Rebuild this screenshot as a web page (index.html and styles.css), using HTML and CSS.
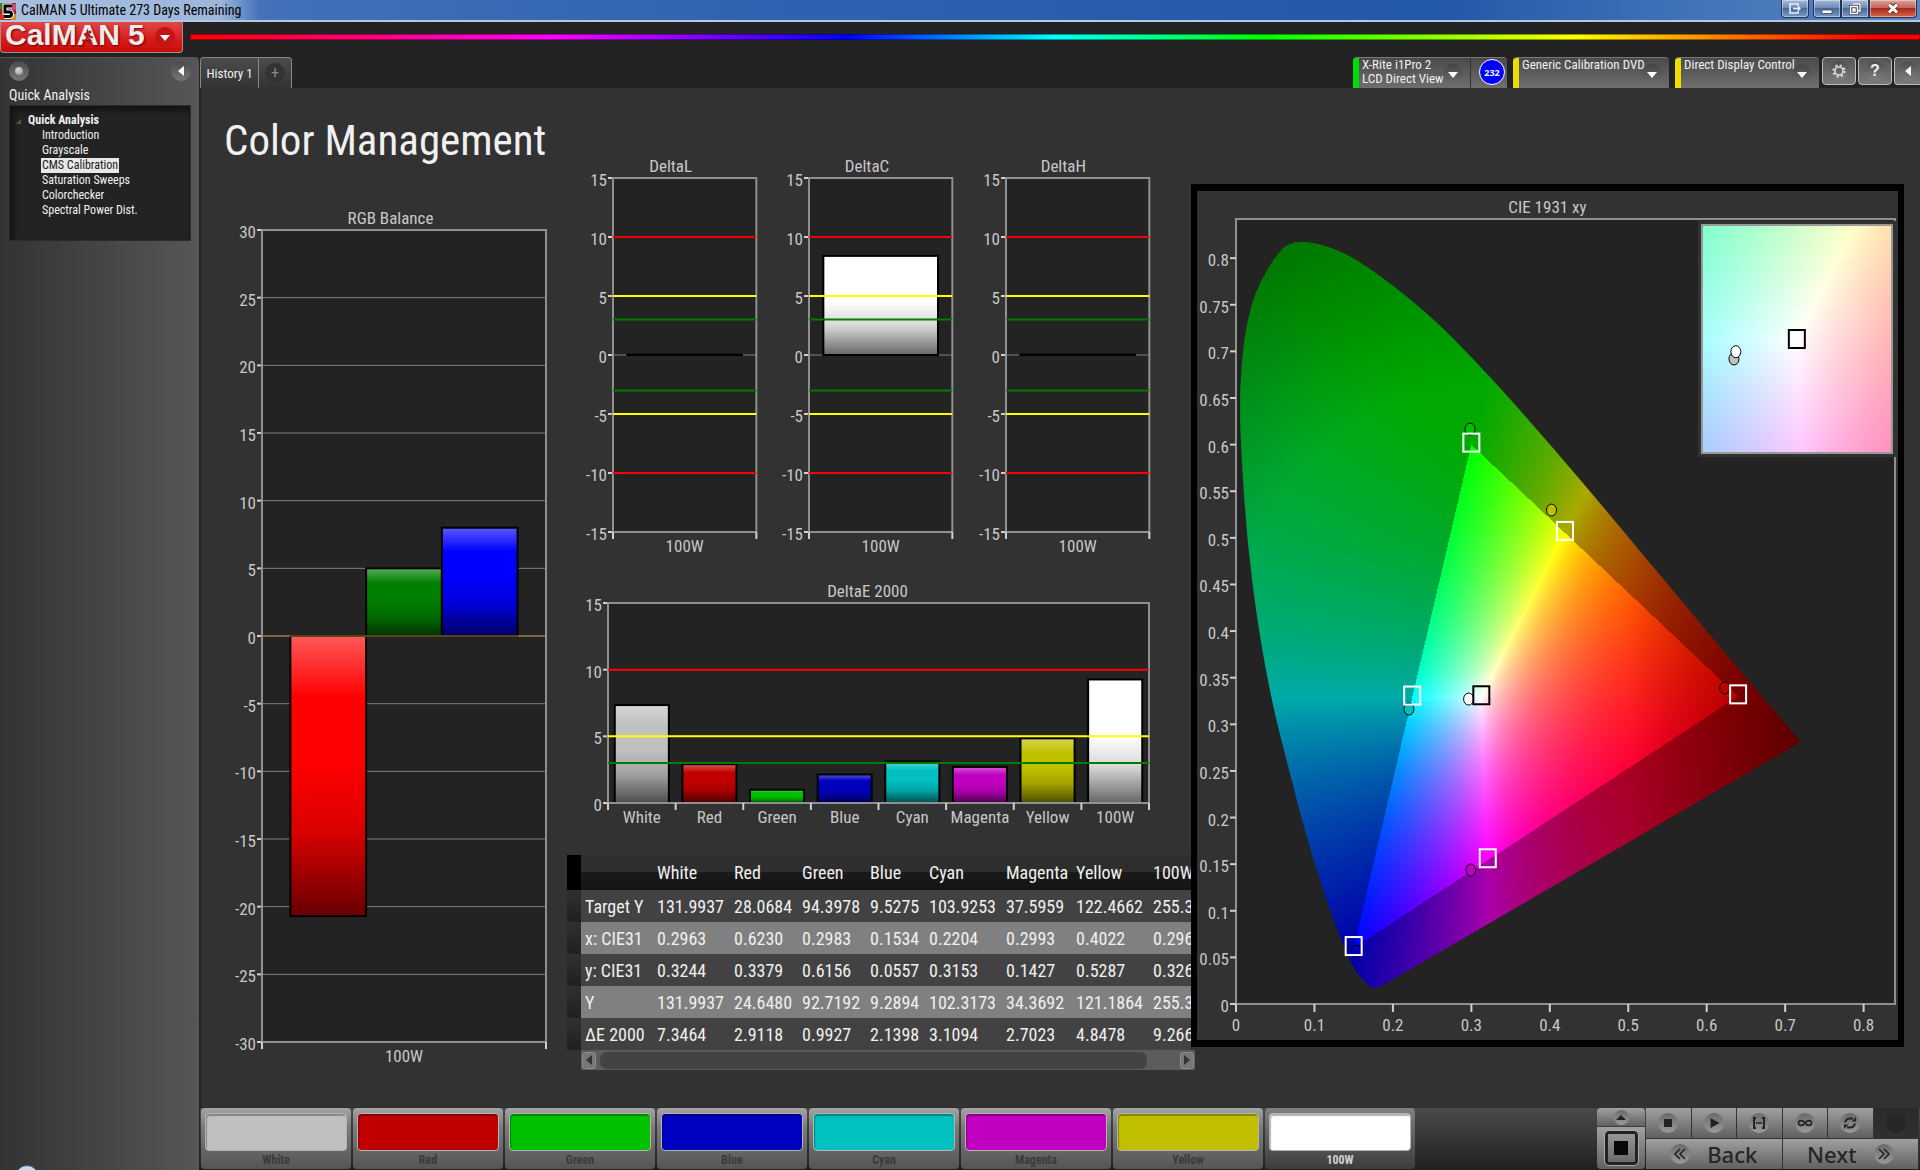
FILE: index.html
```html
<!DOCTYPE html>
<html lang="en">
  <head>
    <meta charset="UTF-8" />
    <meta name="viewport" content="width=device-width, initial-scale=1.0" />
    <title>CalMAN 5 Ultimate 273 Days Remaining</title>
    <link rel="stylesheet" href="styles.css">
  </head>
  <body>
    <header class="titlebar">
      <svg class="app-icon" viewBox="0 0 16 17">
        <rect width="16" height="17" fill="#9c2a22" />
        <rect x="0" y="0" width="5" height="6" fill="#3f7d2a" />
        <rect x="11" y="1" width="5" height="6" fill="#c64a8c" />
        <rect x="11" y="11" width="5" height="6" fill="#d98a1c" />
        <rect x="0" y="11" width="4" height="6" fill="#d8302a" />
        <path d="M12 3H5v6h4.500q2 0 2 2.300t-2.500 2.300H4" fill="none" stroke="#fff" stroke-width="5" />
        <path d="M12 3H5v6h4.500q2 0 2 2.300t-2.500 2.300H4" fill="none" stroke="#000" stroke-width="3" />
      </svg>
      <span class="window-title">CalMAN 5 Ultimate 273 Days Remaining</span>
      <div class="window-buttons">
        <button class="win-btn detach" aria-label="Detach">
          <svg width="12" height="11" viewBox="0 0 12 11"><path d="M9 3V1H1v9h8V8M4 5.500h7M9 3.500l2 2-2 2" fill="none" stroke="#eef" stroke-width="1.500" /></svg>
        </button>
        <div class="win-group">
          <button class="win-btn" aria-label="Minimize">
            <svg width="12" height="11" viewBox="0 0 12 11"><rect x="1" y="7" width="10" height="3.500" fill="#fff" stroke="#445" stroke-width=".8" /></svg>
          </button>
          <button class="win-btn" aria-label="Restore">
            <svg width="12" height="12" viewBox="0 0 12 12"><path d="M4 1h7v7H9M1.500 3.500h7v7h-7zM4 6h2v2H4z" fill="none" stroke="#445" stroke-width="3" /><path d="M4 1h7v7H9M1.500 3.500h7v7h-7zM4 6h2v2H4z" fill="none" stroke="#fff" stroke-width="1.400" /></svg>
          </button>
          <button class="win-btn close" aria-label="Close">
            <svg width="12" height="11" viewBox="0 0 12 11"><path d="M2 1l8 9M10 1L2 10" stroke="#544" stroke-width="4.500" /><path d="M2 1.500l8 8M10 1.500l-8 8" stroke="#fff" stroke-width="2.800" /></svg>
          </button>
        </div>
      </div>
    </header>

    <div class="brand-row">
      <button class="brand">
        <span class="brand-name">CalM<span class="brand-a">A<svg class="runner" viewBox="0 0 14 14"><circle cx="9" cy="2" r="1.600" /><path d="M3 4.500l3-1 2 1.500 1 2 3 .5M8 4.500L6 8l3 2-1 3.500M6 8l-1.500 2.500H1" /></svg></span>N</span>
        <span class="brand-five">5</span>
        <span class="brand-arrow"></span>
      </button>
      <div class="rainbow"></div>
    </div>

    <div class="shell">
      <aside class="sidebar">
        <div class="sidebar-top">
          <button class="round" aria-label="Record"><span class="dot"></span></button>
          <button class="round" aria-label="Collapse"><span class="arrow-left"></span></button>
        </div>
        <h2>Quick Analysis</h2>
        <nav class="tree">
          <p class="tree-root">Quick Analysis</p>
          <a href="#">Introduction</a>
          <a href="#">Grayscale</a>
          <a href="#" class="selected">CMS Calibration</a>
          <a href="#">Saturation Sweeps</a>
          <a href="#">Colorchecker</a>
          <a href="#">Spectral Power Dist.</a>
        </nav>
        <div class="orb-strip"><span class="orb"></span></div>
      </aside>

      <div class="page">
        <div class="toolbar">
          <div class="tabs">
            <button class="tab">History 1</button>
            <button class="tab tab-add" aria-label="Add history"><span>+</span></button>
          </div>
          <div class="devices">
            <div class="device meter">
              <button class="device-menu green">
                <span>X-Rite i1Pro 2<br>LCD Direct View</span>
                <i class="drop"></i>
              </button>
              <button class="count">232</button>
            </div>
            <div class="device source">
              <button class="device-menu yellow"><span>Generic Calibration DVD</span><i class="drop"></i></button>
            </div>
            <div class="device display">
              <button class="device-menu yellow"><span>Direct Display Control</span><i class="drop"></i></button>
            </div>
            <button class="tool" aria-label="Settings">
              <span class="tool-disc"><svg width="14" height="14" viewBox="0 0 14 14"><circle cx="7" cy="7" r="4" fill="none" stroke="#ddd" stroke-width="1.600" /><circle cx="7" cy="7" r="5.700" fill="none" stroke="#ddd" stroke-width="1.800" stroke-dasharray="2.240 2.240" /></svg></span>
            </button>
            <button class="tool" aria-label="Help"><span class="tool-disc help">?</span></button>
            <button class="tool last" aria-label="Collapse panel"><span class="tool-disc"><span class="arrow-left"></span></span></button>
          </div>
        </div>

        <main class="workspace">
          <section class="col-left">
            <h1>Color Management</h1>
            <figure class="chart rgb">
              <figcaption>RGB Balance</figcaption>
              <div class="plot"><svg id="rgbBalance"></svg></div>
            </figure>
          </section>

          <section class="col-mid">
            <div class="deltas">
              <figure class="chart">
                <figcaption>DeltaL</figcaption>
                <div class="plot"><svg id="deltaL"></svg></div>
              </figure>
              <figure class="chart">
                <figcaption>DeltaC</figcaption>
                <div class="plot"><svg id="deltaC"></svg></div>
              </figure>
              <figure class="chart">
                <figcaption>DeltaH</figcaption>
                <div class="plot"><svg id="deltaH"></svg></div>
              </figure>
            </div>
            <figure class="chart delta-e">
              <figcaption>DeltaE 2000</figcaption>
              <div class="plot"><svg id="deltaE"></svg></div>
            </figure>
            <div class="grid-box">
              <div class="grid-clip">
                <table class="readings">
                  <colgroup>
                    <col class="w-sel" /><col class="w-label" /><col class="w-wide" /><col class="w-mid" /><col class="w-mid" />
                    <col class="w-small" /><col class="w-wide" /><col class="w-mag" /><col class="w-wide" /><col class="w-wide" />
                  </colgroup>
                  <thead>
                    <tr><th></th><th></th><th>White</th><th>Red</th><th>Green</th><th>Blue</th><th>Cyan</th><th>Magenta</th><th>Yellow</th><th>100W</th></tr>
                  </thead>
                  <tbody>
                    <tr><td></td><th>Target Y</th><td>131.9937</td><td>28.0684</td><td>94.3978</td><td>9.5275</td><td>103.9253</td><td>37.5959</td><td>122.4662</td><td>255.3</td></tr>
                    <tr><td></td><th>x: CIE31</th><td>0.2963</td><td>0.6230</td><td>0.2983</td><td>0.1534</td><td>0.2204</td><td>0.2993</td><td>0.4022</td><td>0.296</td></tr>
                    <tr><td></td><th>y: CIE31</th><td>0.3244</td><td>0.3379</td><td>0.6156</td><td>0.0557</td><td>0.3153</td><td>0.1427</td><td>0.5287</td><td>0.326</td></tr>
                    <tr><td></td><th>Y</th><td>131.9937</td><td>24.6480</td><td>92.7192</td><td>9.2894</td><td>102.3173</td><td>34.3692</td><td>121.1864</td><td>255.3</td></tr>
                    <tr><td></td><th>ΔE 2000</th><td>7.3464</td><td>2.9118</td><td>0.9927</td><td>2.1398</td><td>3.1094</td><td>2.7023</td><td>4.8478</td><td>9.266</td></tr>
                  </tbody>
                </table>
              </div>
              <div class="hscroll">
                <button aria-label="Scroll left"><span class="arrow-left dark"></span></button>
                <div class="track"><div class="thumb"></div></div>
                <button aria-label="Scroll right"><span class="arrow-right dark"></span></button>
              </div>
            </div>
          </section>

          <section class="col-right">
            <figure class="chart cie">
              <figcaption>CIE 1931 xy</figcaption>
              <div class="plot">
                <canvas id="gamut"></canvas>
                <svg id="ciePoints"></svg>
                <div class="inset">
                  <div class="inset-view">
                    <canvas id="gamutZoom"></canvas>
                    <svg id="zoomPoints"></svg>
                  </div>
                </div>
              </div>
            </figure>
          </section>
        </main>

        <footer class="bottombar">
          <div class="patches">
            <button class="patch"><span class="swatch white"></span>White</button>
            <button class="patch"><span class="swatch red"></span>Red</button>
            <button class="patch"><span class="swatch lime"></span>Green</button>
            <button class="patch"><span class="swatch blue"></span>Blue</button>
            <button class="patch"><span class="swatch cyan"></span>Cyan</button>
            <button class="patch"><span class="swatch magenta"></span>Magenta</button>
            <button class="patch"><span class="swatch olive"></span>Yellow</button>
            <button class="patch active"><span class="swatch full"></span>100W</button>
          </div>
          <div class="transport">
            <div class="stack">
              <button class="key up" aria-label="Expand"><span class="disc small"><span class="arrow-up"></span></span></button>
              <button class="key read" aria-label="Stop reading"><span class="read-frame"><span class="read-square"></span></span></button>
            </div>
            <div class="keys">
              <button class="key" aria-label="Stop"><span class="disc"><svg viewBox="0 0 20 20"><rect x="6" y="6" width="8" height="8" fill="#222" /></svg></span></button>
              <button class="key" aria-label="Play"><span class="disc"><svg viewBox="0 0 20 20"><path d="M6.500 5l9 5-9 5z" fill="#222" /></svg></span></button>
              <button class="key" aria-label="Read series"><span class="disc"><svg viewBox="0 0 20 20"><path d="M7 5H5v10h2M13 5h2v10h-2" fill="none" stroke="#222" stroke-width="2" /><path d="M7 10h6" stroke="#222" stroke-width="2" stroke-dasharray="1.500 .7" /></svg></span></button>
              <button class="key" aria-label="Continuous"><span class="disc"><svg viewBox="0 0 20 20"><path d="M10 10C8 7 3.500 6.500 3.500 10S8 13 10 10s6.500-3.500 6.500 0S12 13 10 10z" fill="none" stroke="#222" stroke-width="1.700" /></svg></span></button>
              <button class="key" aria-label="Refresh"><span class="disc"><svg viewBox="0 0 20 20"><path d="M5 9.500Q6 5.500 10 5.500h3M15 10.500q-1 4-5 4H7" fill="none" stroke="#222" stroke-width="2" /><path d="M11.500 8.500h4.500V4zM8.500 11.500H4V16z" fill="#222" /></svg></span></button>
              <button class="key off" aria-label="Unavailable" disabled><span class="disc dim"></span></button>
              <button class="key wide"><span class="disc"><svg viewBox="0 0 20 20"><path d="M10 5l-5 5 5 5M15 5l-5 5 5 5" fill="none" stroke="#222" stroke-width="1.600" /></svg></span>Back</button>
              <button class="key wide next">Next<span class="disc"><svg viewBox="0 0 20 20"><path d="M5 5l5 5-5 5M10 5l5 5-5 5" fill="none" stroke="#222" stroke-width="1.600" /></svg></span></button>
            </div>
          </div>
        </footer>
      </div>
    </div>

    <script src="charts.js"></script>
  </body>
</html>
```
FILE: styles.css
```css
* {
  box-sizing: border-box;
}
body {
  font-family: "Roboto Condensed", Carlito, Lato, sans-serif;
  margin: 0;
  min-height: 100vh;
  display: flex;
  flex-direction: column;
  background-color: #232323;
  color: #f0f0f0;
  overflow: hidden;
}
button {
  font-family: inherit;
  color: inherit;
  padding: 0;
  border: none;
  background: none;
  cursor: pointer;
}
h1,
h2,
p,
figure {
  margin: 0;
}
svg,
canvas {
  display: block;
}

/* window frame */
.titlebar {
  display: flex;
  align-items: flex-start;
  height: 22px;
  background: linear-gradient(90deg, #a9bfdf 0, #9db6da 220px, #4471b8 260px, #2f62b0 40%, #2458a8 75%, #4273b8 88%, #5a84c2 100%);
  border-bottom: 2px solid #b4c8e4;
}
.app-icon {
  width: 16px;
  height: 17px;
  margin-top: 3px;
}
.window-title {
  margin-left: 5px;
  font-size: 14px;
  line-height: 21px;
  color: #000;
}
.window-buttons {
  display: flex;
  gap: 4px;
  margin-left: auto;
  margin-right: 3px;
}
.win-group {
  display: flex;
}
.win-btn {
  display: grid;
  place-items: center;
  width: 28px;
  height: 18px;
  border: 1px solid #24354f;
  border-top: none;
  background: linear-gradient(#a9bbd8, #6784b2 50%, #48699d 50%, #7d9ac6);
  box-shadow: inset 0 0 0 1px rgba(255, 255, 255, 0.4);
}
.win-btn.detach {
  border-radius: 0 0 4px 4px;
}
.win-group .win-btn:first-child {
  border-radius: 0 0 0 4px;
}
.win-btn.close {
  width: 48px;
  border-radius: 0 0 4px 0;
  background: linear-gradient(#dba296, #c3604f 50%, #a8291a 50%, #d3654c);
}

/* logo and rainbow line */
.brand-row {
  display: flex;
  height: 35px;
}
.brand {
  display: flex;
  align-items: center;
  width: 183px;
  height: 31px;
  padding-left: 4px;
  border: 1px solid #a09090;
  border-top: none;
  border-radius: 0 0 4px 4px;
  background: linear-gradient(#e04848, #d81a1a 60%, #c80c0c);
  font-family: "Liberation Sans", Arial, sans-serif;
  font-size: 30px;
  font-weight: bold;
  line-height: 28px;
  color: #ececec;
  text-shadow: 1px 1px 2px #600;
}
.brand-name,
.brand-five {
  margin-top: -4px;
}
.brand-a {
  position: relative;
}
.runner {
  position: absolute;
  left: 4px;
  top: 12px;
  width: 14px;
  height: 14px;
  fill: #b01818;
}
.runner path {
  fill: none;
  stroke: #b01818;
  stroke-width: 2;
}
.brand-five {
  margin-left: 8px;
}
.brand-arrow {
  position: relative;
  width: 20px;
  height: 20px;
  margin-left: 10px;
  border-radius: 50%;
  background: #c41414;
}
.brand-arrow::after,
.drop::after {
  content: "";
  position: absolute;
  left: 50%;
  top: 50%;
  margin: -2px 0 0 -5px;
  border: 5px solid transparent;
  border-top: 6px solid #fff;
  border-bottom: none;
}
.rainbow {
  flex: 1;
  height: 6px;
  margin: 12px 0 0 7px;
  border: 1px solid rgba(0, 0, 0, 0.4);
  background: linear-gradient(90deg, #f00, #f0f 21%, #00f 38%, #0ff 50%, #0f0 62%, #ff0 80%, #f00 97%);
}

.shell {
  flex: 1;
  display: flex;
  min-height: 0;
}

/* sidebar */
.sidebar {
  display: flex;
  flex-direction: column;
  flex: 0 0 200px;
  padding: 3px 8px 0 9px;
  border-right: 1px solid #222;
  border-top: 1px solid #555;
  border-radius: 0 5px 0 0;
  background: linear-gradient(90deg, #333, #565656);
}
.sidebar-top {
  display: flex;
  justify-content: space-between;
}
.round {
  display: grid;
  place-items: center;
  width: 20px;
  height: 20px;
  border-radius: 50%;
  background: linear-gradient(#4a4a4a, #777);
}
.dot {
  width: 8px;
  height: 8px;
  border-radius: 50%;
  background: radial-gradient(circle at 40% 35%, #ddd, #888);
}
.arrow-left,
.arrow-right {
  border: 5px solid transparent;
  border-left: none;
  border-right: 6px solid #fff;
}
.arrow-right {
  border-right: none;
  border-left: 6px solid #fff;
}
.arrow-left.dark {
  border-right-color: #333;
}
.arrow-right.dark {
  border-left-color: #333;
}
.sidebar h2 {
  margin-top: 5px;
  font-size: 14px;
  font-weight: normal;
  line-height: 19px;
}
.tree {
  display: flex;
  flex-direction: column;
  align-items: flex-start;
  height: 136px;
  padding: 7px 0 0 18px;
  border: 1px solid #2b2b2b;
  background: #232323;
  box-shadow: inset 3px 4px 6px #111;
  font-size: 12px;
}
.tree-root {
  position: relative;
  font-weight: bold;
  line-height: 15px;
}
.tree-root::before {
  content: "";
  position: absolute;
  left: -12px;
  top: 6px;
  border-left: 5px solid transparent;
  border-bottom: 5px solid #555;
}
.tree a {
  margin-left: 13px;
  padding: 0 1px;
  line-height: 15px;
  color: #f0f0f0;
  text-decoration: none;
}
.tree a.selected {
  background: #e8e8e8;
  color: #222;
}
.orb-strip {
  height: 5px;
  margin-top: auto;
  overflow: hidden;
}
.orb {
  display: block;
  width: 24px;
  height: 24px;
  margin-left: 6px;
  border: 1px solid #1a5f94;
  border-radius: 50%;
  background: #c8dbe8;
}

/* tabs and device menus */
.page {
  flex: 1;
  display: flex;
  flex-direction: column;
  min-width: 0;
}
.toolbar {
  display: flex;
  justify-content: space-between;
  height: 31px;
  overflow: hidden;
}
.tabs {
  display: flex;
}
.tab {
  width: 59px;
  height: 31px;
  border: 1px solid #888;
  border-bottom: none;
  border-radius: 4px 0 0 0;
  background: linear-gradient(#4c4c4c, #333);
  font-size: 13px;
}
.tab-add {
  display: grid;
  place-items: center;
  width: 33px;
  border-left: none;
  border-radius: 0 4px 0 0;
}
.tab-add span {
  width: 20px;
  height: 20px;
  border-radius: 50%;
  background: #333;
  color: #888;
  font-size: 16px;
  line-height: 19px;
}
.devices {
  display: flex;
}
.device {
  display: flex;
  margin-right: 6px;
  border-top: 1px solid #777;
  border-radius: 4px 4px 0 0;
  background: linear-gradient(#4a4a4a, #6e6e6e);
  overflow: hidden;
}
.meter {
  width: 154px;
}
.source {
  width: 156px;
}
.display {
  width: 144px;
  margin-right: 3px;
}
.device-menu {
  flex: 1;
  display: flex;
  justify-content: space-between;
  padding: 0 7px 0 3px;
  border-left: 6px solid #0d0;
  font-size: 13px;
  line-height: 14px;
  text-align: left;
}
.device-menu.yellow {
  border-left-color: #ed0;
}
.device-menu span {
  white-space: nowrap;
}
.drop {
  position: relative;
  width: 20px;
  height: 20px;
  margin-top: 6px;
  border-radius: 50%;
  background: linear-gradient(#444, #6c6c6c);
  flex-shrink: 0;
}
.device-menu .drop {
  margin-left: -4px;
}
.count {
  width: 26px;
  height: 26px;
  margin: 1px 2px 0 8px;
  border: 1px solid #fff;
  border-radius: 50%;
  background: #00f;
  font-family: "Noto Sans", sans-serif;
  font-size: 9px;
  font-weight: bold;
}
.meter .device-menu {
  border-right: 1px solid #333;
}
.tool {
  display: grid;
  place-items: center;
  width: 34px;
  height: 28px;
  margin-right: 2px;
  border: 1px solid #bbb;
  border-radius: 4px;
  background: linear-gradient(#555, #7a7a7a);
}
.tool.last {
  width: 26px;
  margin-right: 0;
  border-right: none;
  border-radius: 4px 0 0 4px;
}
.tool-disc {
  display: grid;
  place-items: center;
  width: 20px;
  height: 20px;
  border-radius: 50%;
  background: linear-gradient(#4c4c4c, #808080);
}
.help {
  font-family: "Liberation Sans", sans-serif;
  font-size: 16px;
  font-weight: bold;
}

/* workspace */
.workspace {
  flex: 1;
  display: grid;
  grid-template-columns: 320fr 645fr 713fr;
  min-height: 0;
  padding: 0 16px 0 25px;
  border-left: 1px solid #222;
  background: #323232;
}
.col-left,
.col-mid,
.col-right {
  display: flex;
  flex-direction: column;
  min-width: 0;
}
h1 {
  margin: 24px 0 38px -2px;
  font-size: 43px;
  font-weight: normal;
  line-height: 56px;
  white-space: nowrap;
}
.chart {
  display: flex;
  flex-direction: column;
  min-width: 0;
  color: #c8c8c8;
}
figcaption {
  font-size: 17px;
  line-height: 24px;
  text-align: center;
}
.plot {
  position: relative;
  flex: 1;
  background: #232323;
}
.plot svg {
  position: absolute;
  width: 100%;
  height: 100%;
  overflow: visible;
}
.plot canvas {
  position: absolute;
  width: 100%;
  height: 100%;
}
.plot text {
  font-size: 17px;
  fill: #c8c8c8;
}
.frame {
  fill: none;
  stroke: #909090;
  stroke-width: 2;
}
.gridline {
  stroke: #808080;
  stroke-width: 1;
}
.tick {
  stroke: #d0d0d0;
  stroke-width: 2;
}
.bar {
  stroke: #000;
  stroke-width: 2;
}
.target {
  fill: none;
  stroke-width: 2;
}
.reading {
  stroke: #000;
  stroke-width: 1;
}
.rgb {
  flex: 1;
  margin-left: 9px;
}
.rgb .plot {
  margin: 0 0 66px 27px;
}
.col-mid {
  display: grid;
  grid-template-rows: 425fr 276fr auto;
  padding: 66px 0 38px;
  margin-left: 21px;
}
.deltas {
  display: grid;
  grid-template-columns: 1fr 1fr 1fr;
  gap: 25px;
  padding: 0 42px 0 18px;
}
.deltas .plot {
  margin: 0 0 47px 28px;
}
.delta-e {
  margin: 0 42px 0 19px;
}
.delta-e .plot {
  margin: 0 0 52px 22px;
}

/* readings table */
.grid-box {
  min-width: 0;
}
.grid-clip {
  overflow: hidden;
}
.readings {
  width: 659px;
  table-layout: fixed;
  border-collapse: collapse;
  font-size: 18px;
  line-height: 20px;
}
.readings th,
.readings td {
  height: 32px;
  padding: 1px 0 0 4px;
  font-weight: normal;
  text-align: left;
  white-space: nowrap;
}
.readings thead th {
  height: 35px;
  background: linear-gradient(#2e2e2e 48%, #1a1a1a 50%, #141414);
}
.readings thead th:first-child {
  background: #000;
}
.readings tbody tr {
  background: #424242;
}
.readings tbody tr:nth-child(even) {
  background: #808080;
}
.readings tbody td:first-child {
  background: linear-gradient(#303030, #202020);
}
.w-sel {
  width: 14px;
}
.w-label {
  width: 72px;
}
.w-wide {
  width: 77px;
}
.w-mid {
  width: 68px;
}
.w-small {
  width: 59px;
}
.w-mag {
  width: 70px;
}
.hscroll {
  display: flex;
  align-items: center;
  gap: 4px;
  height: 20px;
  margin: 0 -4px 0 14px;
  padding: 0 1px;
  background: #5c5c5c;
}
.hscroll button {
  display: grid;
  place-items: center;
  width: 14px;
  height: 17px;
  border: 1px solid #8c8c8c;
  border-radius: 3px;
  background: #777;
}
.track {
  flex: 1;
}
.thumb {
  width: 95%;
  height: 17px;
  border-radius: 7px;
  background: #434343;
}

/* chromaticity diagram */
.cie {
  flex: 1;
  margin: 96px 0 61px;
  border: solid #000;
  border-width: 7px 6px;
  background: #323232;
}
.cie figcaption {
  padding-top: 4px;
}
.cie .plot {
  margin: 0 3px 36px 39px;
}
.inset {
  position: absolute;
  top: 2px;
  right: -1px;
  width: 30%;
  height: 30%;
  padding: 3px;
  background: #323232;
}
.inset-view {
  position: relative;
  width: 100%;
  height: 100%;
  border: 2px solid #999;
}

/* patches and transport */
.bottombar {
  display: flex;
  justify-content: space-between;
  height: 62px;
  padding: 0 1px 1px;
  background: linear-gradient(#4a4a4a, #202020);
}
.patches {
  flex: 1;
  display: flex;
  gap: 2px;
}
.patch {
  display: flex;
  flex-direction: column;
  flex: 0 1 150px;
  padding: 5px 4px 0;
  border-radius: 4px;
  background: linear-gradient(#a4a4a4, #7c7c7c 30%, #555);
  color: #3a3a3a;
  font-size: 12px;
  font-weight: bold;
  line-height: 18px;
}
.patch.active {
  background: linear-gradient(#808080, #3c3c3c);
  color: #d0d0d0;
}
.swatch {
  align-self: stretch;
  height: 38px;
  border: 1px solid #b4b4b4;
  border-radius: 4px;
  box-shadow: inset 1px 2px 1px rgba(0, 0, 0, 0.3);
}
.swatch.white {
  background: #c0c0c0;
}
.swatch.red {
  background: #c00000;
}
.swatch.lime {
  background: #00c000;
}
.swatch.blue {
  background: #0000c0;
}
.swatch.cyan {
  background: #00c0c0;
}
.swatch.magenta {
  background: #c000c0;
}
.swatch.olive {
  background: #c0c000;
}
.swatch.full {
  background: #fff;
}
.transport {
  display: flex;
  gap: 1px;
}
.stack {
  display: flex;
  flex-direction: column;
  gap: 1px;
  width: 48px;
}
.key {
  display: flex;
  align-items: center;
  justify-content: center;
  background: linear-gradient(#a0a0a0, #606060);
}
.key.up {
  height: 18px;
  border-radius: 4px 4px 0 0;
}
.key.read {
  flex: 1;
  border-radius: 0 0 4px 4px;
}
.read-frame {
  display: grid;
  place-items: center;
  width: 33px;
  height: 34px;
  border: 3px solid #222;
  border-radius: 4px;
  outline: 1px solid #aaa;
}
.read-square {
  width: 14px;
  height: 14px;
  background: #080808;
}
.keys {
  display: grid;
  grid-template-columns: repeat(6, 1fr);
  grid-template-rows: 30px 30px;
  gap: 1px 0;
  width: 273px;
}
.keys .key {
  border-right: 1px solid #333;
}
.disc {
  display: grid;
  place-items: center;
  width: 20px;
  height: 20px;
  border-radius: 50%;
  background: linear-gradient(#6a6a6a, #9a9a9a);
}
.disc svg {
  width: 20px;
  height: 20px;
}
.disc.small {
  width: 15px;
  height: 15px;
}
.arrow-up {
  border: 5px solid transparent;
  border-top: none;
  border-bottom-color: #222;
}
.keys .key.off {
  background: linear-gradient(#2a2a2a, #303030);
}
.disc.dim {
  background: #262626;
}
.keys .key.wide {
  grid-column: span 3;
  gap: 17px;
  font-family: "Noto Sans", sans-serif;
  font-size: 22px;
  font-weight: 500;
  line-height: 28px;
  color: #262626;
}
```
FILE: charts.js
```js
const NS = "http://www.w3.org/2000/svg";

function add(svg, tag, attrs, text) {
  const el = document.createElementNS(NS, tag);
  for (const key in attrs) el.setAttribute(key, attrs[key]);
  if (text !== undefined) el.textContent = text;
  svg.appendChild(el);
  return el;
}

function pct(v) {
  return v * 100 + "%";
}

// label with a pixel shift from its percentage anchor
function label(svg, x, y, dx, dy, anchor, text) {
  add(svg, "text", { x, y, dx, dy, "text-anchor": anchor }, text);
}

function tick(svg, x, y, dx, dy) {
  const g = add(svg, "svg", { x, y, width: 1, height: 1 });
  add(g, "line", { x1: 0, y1: 0, x2: dx, y2: dy, class: "tick" });
}

function gloss(svg, id) {
  const grad = add(svg, "linearGradient", { id, x1: 0, y1: 0, x2: 0, y2: 1 });
  [
    [0, "#fff", 0.35],
    [0.22, "#fff", 0],
    [0.45, "#000", 0],
    [0.7, "#000", 0.15],
    [1, "#000", 0.6],
  ].forEach(([offset, color, opacity]) =>
    add(grad, "stop", { offset, "stop-color": color, "stop-opacity": opacity })
  );
}

function barChart(id, o) {
  const svg = document.getElementById(id);
  const y = (v) => (o.max - v) / (o.max - o.min);
  gloss(svg, id + "Gloss");

  for (let v = o.min; v <= o.max; v += 5) {
    add(svg, "line", { x1: 0, x2: "100%", y1: pct(y(v)), y2: pct(y(v)), class: "gridline" });
    tick(svg, 0, pct(y(v)), -5, 0);
    label(svg, 0, pct(y(v)), -6, 8, "end", v);
  }

  const n = o.groups.length;
  o.groups.forEach((group, i) => {
    const w = 0.8 / n / group.bars.length;
    group.bars.forEach(([value, color], j) => {
      const box = {
        x: pct((i + 0.1) / n + j * w),
        y: pct(y(Math.max(value, 0))),
        width: pct(w),
        height: pct(Math.abs(value) / (o.max - o.min)),
      };
      add(svg, "rect", { ...box, fill: color });
      add(svg, "rect", { ...box, fill: `url(#${id}Gloss)`, class: "bar" });
    });
    label(svg, pct((i + 0.5) / n), "100%", 0, 20, "middle", group.name);
  });

  add(svg, "rect", { width: "100%", height: "100%", class: "frame" });
  for (let i = 0; i <= n; i++) tick(svg, pct(i / n), "100%", 0, 7);

  o.limits.forEach(([v, color, width]) =>
    add(svg, "line", {
      x1: 0, x2: "100%", y1: pct(y(v)), y2: pct(y(v)), stroke: color, "stroke-width": width,
    })
  );
}

barChart("rgbBalance", {
  min: -30,
  max: 30,
  groups: [{ name: "100W", bars: [[-20.7, "#f00"], [5, "#008000"], [8, "#00f"]] }],
  limits: [[0, "#b08030", 1]],
});

const deltaLimits = [
  [10, "#e00", 2], [5, "#ff0", 2], [3, "#007c00", 2],
  [-3, "#007c00", 2], [-5, "#ff0", 2], [-10, "#f00", 2],
];
[["deltaL", 0.03], ["deltaC", 8.4], ["deltaH", 0.03]].forEach(([id, value]) =>
  barChart(id, {
    min: -15,
    max: 15,
    groups: [{ name: "100W", bars: [[value, "#fff"]] }],
    limits: deltaLimits,
  })
);

barChart("deltaE", {
  min: 0,
  max: 15,
  groups: [
    ["White", 7.3464, "#c0c0c0"],
    ["Red", 2.9118, "#c00000"],
    ["Green", 0.9927, "#00c000"],
    ["Blue", 2.1398, "#0000c0"],
    ["Cyan", 3.1094, "#00c0c0"],
    ["Magenta", 2.7023, "#c000c0"],
    ["Yellow", 4.8478, "#c0c000"],
    ["100W", 9.266, "#fff"],
  ].map(([name, value, color]) => ({ name, bars: [[value, color]] })),
  limits: [[10, "#f00", 2], [5, "#ff0", 2], [3, "#007c00", 2]],
});

// chromaticity diagram
const X_MAX = 0.84;
const Y_MAX = 0.842;
const WHITE = [0.3127, 0.329];
const LOCUS = [
  [0.173, 0.0175], [0.160, 0.026], [0.1445, 0.0472], [0.1207, 0.0972], [0.0913, 0.174],
  [0.0643, 0.2616], [0.0465, 0.3206], [0.0287, 0.401], [0.0139, 0.4977], [0.0061, 0.5977],
  [0.0043, 0.655], [0.0097, 0.712], [0.0198, 0.7514], [0.0317, 0.7764], [0.0495, 0.801],
  [0.0643, 0.815], [0.085, 0.819], [0.122, 0.812], [0.1623, 0.795], [0.2455, 0.741],
  [0.3227, 0.6745], [0.403, 0.5977], [0.477, 0.5244], [0.5987, 0.401], [0.72, 0.281],
];

function chroma(x, y) {
  const X = x / y;
  const Z = (1 - x - y) / y;
  const lin = [
    3.2406 * X - 1.5372 - 0.4986 * Z,
    -0.9689 * X + 1.8758 + 0.0415 * Z,
    0.0557 * X - 0.204 + 1.057 * Z,
  ];
  const inside = Math.min(...lin) >= 0;
  const top = Math.max(...lin);
  let level = inside ? 1 : 0.667;
  // fade near the far red and far green ends
  level *= 1 - Math.max(0, x - 0.5) * 2.1;
  if (y > 0.4) level *= 1 - Math.max(0, Math.hypot(x - WHITE[0], y - WHITE[1]) - 0.33) * 1.4;
  return lin.map((c) => (255 * level * Math.max(c, 0)) / top);
}

function paint(id, x0, x1, y0, y1, clip) {
  const canvas = document.getElementById(id);
  const w = (canvas.width = canvas.clientWidth);
  const h = (canvas.height = canvas.clientHeight);
  const layer = document.createElement("canvas");
  layer.width = w;
  layer.height = h;
  const lctx = layer.getContext("2d");
  const img = lctx.createImageData(w, h);
  for (let j = 0; j < h; j++) {
    for (let i = 0; i < w; i++) {
      const y = y1 - ((j + 0.5) / h) * (y1 - y0);
      const x = x0 + ((i + 0.5) / w) * (x1 - x0);
      const k = (j * w + i) * 4;
      const rgb = chroma(x, y);
      img.data[k] = rgb[0];
      img.data[k + 1] = rgb[1];
      img.data[k + 2] = rgb[2];
      img.data[k + 3] = 255;
    }
  }
  lctx.putImageData(img, 0, 0);
  const ctx = canvas.getContext("2d");
  if (clip) {
    const p = LOCUS.map(([x, y]) => [(x / x1) * w, (1 - y / y1) * h]);
    const last = p.length - 1;
    ctx.beginPath();
    ctx.moveTo(...p[last]);
    ctx.lineTo((0.19 / x1) * w, (1 - 0.0215 / y1) * h);
    ctx.quadraticCurveTo((0.18 / x1) * w, (1 - 0.0165 / y1) * h, ...p[0]);
    for (let i = 1; i < last; i++) {
      ctx.quadraticCurveTo(...p[i], (p[i][0] + p[i + 1][0]) / 2, (p[i][1] + p[i + 1][1]) / 2);
    }
    ctx.closePath();
    ctx.clip();
  }
  ctx.drawImage(layer, 0, 0);
}

function marker(svg, x, y, shape) {
  const g = add(svg, "svg", { x: pct(x), y: pct(y), width: 1, height: 1 });
  if (shape.target) {
    add(g, "rect", { x: -8, y: -11, width: 16, height: 18, class: "target", stroke: shape.target });
  } else {
    add(g, "ellipse", { cy: -1, rx: 5, ry: 6, class: "reading", fill: shape.fill });
  }
}

const cie = document.getElementById("ciePoints");
add(cie, "rect", { width: "100%", height: "100%", class: "frame" });
for (let i = 0; i <= 16; i++) {
  const at = pct(1 - i / 20 / Y_MAX);
  tick(cie, 0, at, -6, 0);
  label(cie, 0, at, -7, 8, "end", i / 20);
}
for (let i = 0; i <= 8; i++) {
  const at = pct(i / 10 / X_MAX);
  tick(cie, at, "100%", 0, 8);
  label(cie, at, "100%", 0, 27, "middle", i / 10);
}
[
  [0.623, 0.3379, "#c00000"], [0.2983, 0.6156, "#00c000"], [0.1534, 0.0557, "#0000c0"],
  [0.2204, 0.3153, "#00c0c0"], [0.2993, 0.1427, "#c000c0"], [0.4022, 0.5287, "#c0c000"],
  [0.2965, 0.326, "#fff"],
].forEach(([x, y, fill]) => marker(cie, x / X_MAX, 1 - y / Y_MAX, { fill }));
[
  [0.64, 0.33, "#fff"], [0.3, 0.6, "#fff"], [0.15, 0.06, "#fff"], [0.2246, 0.3287, "#fff"],
  [0.3209, 0.1542, "#fff"], [0.4193, 0.5053, "#fff"], [...WHITE, "#000"],
].forEach(([x, y, target]) => marker(cie, x / X_MAX, 1 - y / Y_MAX, { target }));

const zoom = document.getElementById("zoomPoints");
marker(zoom, 0.5, 0.51, { target: "#000" });
marker(zoom, 0.165, 0.594, { fill: "#c0c0c0" });
marker(zoom, 0.175, 0.562, { fill: "#fff" });

function paintAll() {
  paint("gamut", 0, X_MAX, 0, Y_MAX, true);
  paint("gamutZoom", WHITE[0] - 0.0256, WHITE[0] + 0.0256, WHITE[1] - 0.0256, WHITE[1] + 0.0256, false);
}
paintAll();
window.addEventListener("resize", paintAll);
```
